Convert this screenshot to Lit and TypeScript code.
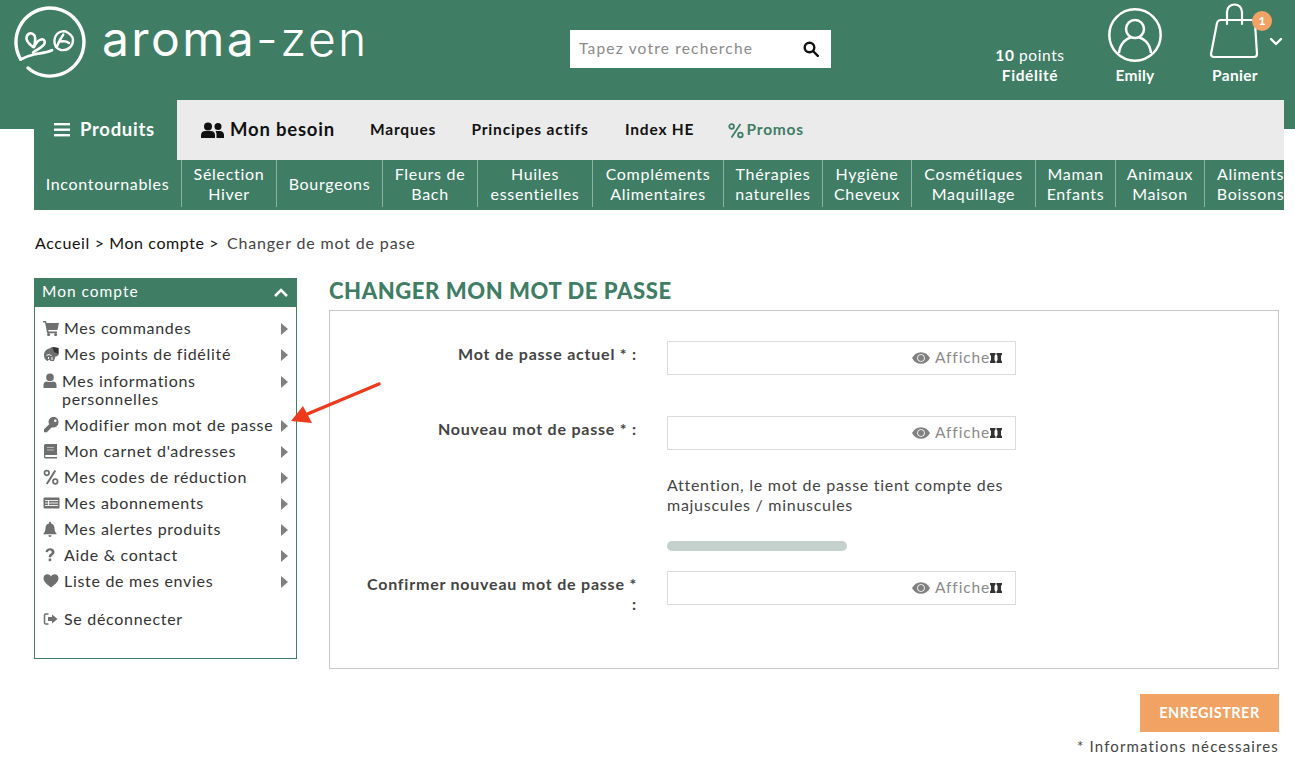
import { LitElement, html, css, svg } from "lit";
import { customElement } from "lit/decorators.js";

const GREY = "#6f6f6f";
const icons: Record<string, any> = {
  cart: svg`<path d="M0 1h3l.6 2H16l-1.6 7H5.2l.4 1.6H14v1.6H4.2L2 2.6H0z"/><circle cx="5.6" cy="14.6" r="1.5"/><circle cx="12.6" cy="14.6" r="1.5"/>`,
  coins: svg`<path d="M1 9c0-3.500 2.500-6 5.500-6.500L9 1l6.500 1v7c-1 1-2 1.500-3 1.500L11 15H7.500l-1-1.500-2 1.500C2 14 1 12 1 9z"/><path d="M9.500 1l6 1v6l-4.500-2z" fill="#333"/><path d="M3.500 9.500c2-1.500 4-1 5 .5M5.500 13v-2M9 14v-3" stroke="#fff" fill="none"/>`,
  user: svg`<circle cx="7" cy="4.4" r="3.8"/><path d="M.5 15v-3.200C.5 9.600 2.200 8.400 4 8.400c1 .8 5 .8 6 0 1.800 0 3.500 1.200 3.500 3.400V15z"/>`,
  key: svg`<path d="M15.500 5.500a5 5 0 0 1-6.600 4.700L3.800 15.300H1v-3l5.200-5A5 5 0 1 1 15.500 5.500z"/><circle cx="12.300" cy="3.700" r="1.300" fill="#fff"/>`,
  book: svg`<path d="M1 2.500A1.500 1.500 0 0 1 2.500 1H14v11H3a1 1 0 0 0 0 2h11v1.500H2.500A1.500 1.500 0 0 1 1 14z"/><path d="M4 4h7v1H4zM4 6.500h7v1H4z" fill="#fff" opacity=".5"/>`,
  pct: svg`<path d="M12.300 1.500L3.800 15" stroke-width="2" stroke="${GREY}" fill="none"/><circle cx="3.800" cy="4" r="2.300" fill="none" stroke="${GREY}" stroke-width="1.700"/><circle cx="12.300" cy="12.500" r="2.300" fill="none" stroke="${GREY}" stroke-width="1.700"/>`,
  list: svg`<path d="M1.500 2.500h14a1 1 0 0 1 1 1v9a1 1 0 0 1-1 1h-14a1 1 0 0 1-1-1v-9a1 1 0 0 1 1-1z"/><path d="M2 5.500h13M2 8h13M2 10.500h13M5.500 5v6" stroke="#fff" fill="none" stroke-width=".9"/>`,
  bell: svg`<path d="M7 .8c.6 0 1 .4 1 1v.7c2.300.5 3.500 2.400 3.500 4.500 0 3 .8 4.300 2 5.500v.8H.5V12.500c1.200-1.200 2-2.500 2-5.500C2.500 4.900 3.700 3 6 2.500v-.7c0-.6.4-1 1-1z"/><path d="M5.300 14.300h3.400a1.700 1.700 0 0 1-3.400 0z"/>`,
  help: svg`<path d="M2.500 5c.3-2.700 2.200-3.800 4.500-3.800 2.500 0 4.500 1.500 4.500 3.700 0 3-3.300 3.100-3.300 5.400H5.700c0-3.500 3-3.400 3-5.300 0-.9-.7-1.500-1.800-1.500-1.200 0-1.800.6-2 1.800z"/><rect x="5.700" y="11.500" width="2.500" height="2.700"/>`,
  heart: svg`<path d="M8 14.500C5 12 .5 9 .5 5.200.5 2.800 2.300 1.300 4.300 1.300c1.600 0 2.900.9 3.700 2.200.8-1.300 2.100-2.200 3.700-2.200 2 0 3.800 1.500 3.800 3.900C15.500 9 11 12 8 14.500z"/>`,
  out: svg`<path d="M5.500 3H2.800C2 3 1.500 3.500 1.500 4.300v7.400c0 .8.500 1.300 1.300 1.300h2.700" fill="none" stroke="${GREY}" stroke-width="1.500"/><path d="M9 3.500l5.500 4.500L9 12.500V10H5V6h4z"/>`,
};

interface Item { i: string; w: number; t: any; tall?: boolean; }
const items: Item[] = [
  { i: "cart", w: 17, t: "Mes commandes" },
  { i: "coins", w: 16, t: "Mes points de fidélité" },
  { i: "user", w: 14, t: html`Mes informations<br />personnelles`, tall: true },
  { i: "key", w: 16, t: "Modifier mon mot de passe" },
  { i: "book", w: 15, t: "Mon carnet d'adresses" },
  { i: "pct", w: 16, t: "Mes codes de réduction" },
  { i: "list", w: 17, t: "Mes abonnements" },
  { i: "bell", w: 14, t: "Mes alertes produits" },
  { i: "help", w: 14, t: "Aide & contact" },
  { i: "heart", w: 16, t: "Liste de mes envies" },
];

const sub = [
  ["Incontournables"], ["Sélection", "Hiver"], ["Bourgeons"], ["Fleurs de", "Bach"],
  ["Huiles", "essentielles"], ["Compléments", "Alimentaires"], ["Thérapies", "naturelles"],
  ["Hygiène", "Cheveux"], ["Cosmétiques", "Maquillage"], ["Maman", "Enfants"],
  ["Animaux", "Maison"], ["Aliments", "Boissons"],
];

@customElement("app-root")
export class AppRoot extends LitElement {
  static styles = css`
    :host { display: block; font-family: "Lato", "Open Sans", sans-serif; color: #333; }
    * { box-sizing: border-box; }
    .page { position: relative; height: 761px; overflow: hidden; background: linear-gradient(#3f7d65 129px, #fff 129px); }
    .top { display: flex; height: 100px; color: #fff; }
    .logo { display: flex; align-items: flex-start; width: 570px; padding: 6px 0 0 14px; }
    .logo svg { width: 74px; height: 74px; flex: none; display: block; }
    .wordmark { font-family: "Inter", sans-serif; font-weight: 300; font-size: 48px; letter-spacing: 2.4px; line-height: 66px; margin-left: 14px; }
    .wordmark b { font-weight: 400; }
    .search { width: 261px; height: 38px; margin-top: 30px; background: #fff; display: flex; align-items: center; justify-content: space-between; padding: 0 12px 2px 9px; color: #8a8a8a; font-size: 15.5px; letter-spacing: 1.18px; }
    .search svg { width: 16px; height: 16px; display: block; margin-top: 2px; }
    .right { margin-left: 139px; display: flex; }
    .acc { width: 90px; display: flex; flex-direction: column; align-items: center; justify-content: flex-end; height: 85px; font-weight: 700; font-size: 15.5px; line-height: 20px; letter-spacing: .3px; text-align: center; position: relative; }
    .acc.points { width: 120px; font-weight: 400; letter-spacing: .6px; }
    .acc.points b { font-weight: 700; }
    .acc.panier { width: 110px; }
    .acc svg { display: block; }
    .acc .usr { margin-bottom: 3px; }
    .badge { position: absolute; top: 11px; left: 72px; width: 20px; height: 20px; border-radius: 50%; background: #f2a263; font-size: 12px; line-height: 20px; font-weight: 900; letter-spacing: 0; }
    .nav { margin: 0 11px 0 34px; }
    .nav1 { display: flex; height: 60px; background: #ebebeb; align-items: center; color: #111; }
    .prod { width: 143px; height: 60px; background: #3f7d65; color: #fff; display: flex; align-items: center; gap: 10px; padding: 0 0 2px 20px; font-weight: 700; font-size: 18.5px; letter-spacing: .7px; }
    .prod svg { display: block; margin-top: 2px; }
    .besoin { display: flex; align-items: center; gap: 6px; margin-left: 24px; width: 169px; padding-bottom: 2px; font-size: 18.5px; font-weight: 700; letter-spacing: .8px; }
    .besoin svg { margin-top: 2px; }
    .l { font-weight: 700; font-size: 15.5px; letter-spacing: .8px; white-space: nowrap; padding-bottom: 2px; }
    .w1 { width: 101.5px; }
    .w2 { width: 153.5px; }
    .w3 { width: 102.5px; }
    .promos { color: #3f7d65; display: flex; align-items: center; gap: 3px; }
    .promos svg { margin-top: 2px; }
    .nav2 { display: grid; grid-template-columns: 148px 95px 106px 95px 115px 131px 99px 89px 124px 80px 89px 91px; height: 50px; background: #3f7d65; color: #fff; overflow: hidden; }
    .cell { height: 47px; display: flex; flex-direction: column; align-items: center; justify-content: center; border-right: 1px solid rgba(255,255,255,.4); font-size: 16px; line-height: 20px; letter-spacing: .7px; white-space: nowrap; padding-top: 1px; }
    .cell:last-child { border-right: 0; }
    .crumb { margin: 23px 0 0 35px; height: 21px; font-size: 16px; line-height: 20px; letter-spacing: .6px; color: #111; }
    .crumb span { color: #444; margin-left: 3px; letter-spacing: .85px; }
    .body { display: flex; margin: 24px 16px 0 34px; align-items: flex-start; }
    .side { width: 263px; height: 381px; border: 1px solid #3f7d65; flex: none; }
    .side-h { margin: -1px -1px 0; background: #3f7d65; color: #fff; display: flex; align-items: center; justify-content: space-between; padding: 0 9px 3px 8px; font-size: 15.5px; letter-spacing: 1px; height: 29px; }
    .side-h svg { margin-top: 3px; }
    .list { padding: 8px 7px 0 8px; }
    .row { display: flex; align-items: flex-start; padding: 4px 0; line-height: 18px; font-size: 16px; letter-spacing: .7px; color: #333; }
    .row.tall { padding: 5px 0 4px; }
    .ic { width: 21px; flex: none; margin-top: 1px; fill: #6f6f6f; display: flex; }
    .tall .ic { width: 19px; }
    .ic svg { display: block; }
    .tx { flex: 1; }
    .arr { width: 0; height: 0; border-left: 7px solid #808080; border-top: 6.5px solid transparent; border-bottom: 6.5px solid transparent; margin: 4px 1px 0 0; flex: none; }
    .row.logout { margin-top: 12px; }
    .main { margin-left: 32px; flex: 1; }
    h1 { margin: 0; font-size: 22px; line-height: 26px; font-weight: 900; color: #3f7d65; letter-spacing: .58px; height: 32px; }
    .box { height: 359px; border: 1px solid #c9c9c9; padding-top: 30px; }
    .f { display: grid; grid-template-columns: 307px 349px; column-gap: 30px; }
    .lab { text-align: right; font-weight: 700; font-size: 16px; line-height: 20px; letter-spacing: .78px; color: #444; padding-top: 3px; }
    .f2 { margin-top: 41px; }
    .f3 { margin-top: 20px; }
    .input { height: 34px; border: 1px solid #dcdcdc; display: flex; align-items: center; justify-content: flex-end; padding: 0 13px 3px 0; color: #8a8a8a; font-size: 15.5px; letter-spacing: .85px; gap: 5px; }
    .input svg { display: block; flex: none; margin-top: 3px; }
    .input .bt { width: 12px; margin-left: -5px; }
    .note { margin: 25px 0 0 337px; width: 350px; font-size: 16px; line-height: 20px; letter-spacing: .72px; color: #444; }
    .bar { margin: 26px 0 0 337px; width: 180px; height: 10px; border-radius: 5px; background: #c5d1cc; }
    .btn { margin: 25px 0 0 auto; width: 139px; height: 38px; padding-bottom: 1px; background: #f2a263; color: #fff; font-weight: 700; font-size: 14.5px; letter-spacing: .45px; display: flex; align-items: center; justify-content: center; }
    .req { text-align: right; margin-top: 4px; font-size: 15px; line-height: 20px; letter-spacing: 1.14px; color: #444; }
    .annot { position: absolute; left: 285px; top: 375px; pointer-events: none; }
  `;

  private eye() {
    return html`<svg width="18" height="12" viewBox="0 0 17 11"><path fill="#808080" d="M8.500 0C4.800 0 1.800 2.100 0 5.500 1.800 8.900 4.800 11 8.500 11s6.700-2.100 8.500-5.500C15.200 2.100 12.200 0 8.500 0z"/><circle cx="8.500" cy="5.500" r="3.600" fill="#fff"/><circle cx="8.500" cy="5.500" r="2.800" fill="#808080"/></svg>`;
  }
  private field() {
    return html`<div class="input">${this.eye()}<span>Affiche</span><svg class="bt" width="12" height="10" viewBox="0 0 12 10"><path fill="#333" d="M0 0h5.500v1.500l-1 1.500v4l1 1.500V10H0V8.500L1 7V3L0 1.500zM6.500 0H12v1.500L11 3v4l1 1.500V10H6.500V8.500l1-1.500V3l-1-1.500z"/></svg></div>`;
  }

  render() {
    return html`<div class="page">
      <div class="top">
        <div class="logo">
          <svg viewBox="0 0 74 74" fill="none" stroke="#fff" stroke-width="3.400" stroke-linecap="round" stroke-linejoin="round">
            <path d="M6.500 53A34 34 0 1 1 14 62"/>
            <path d="M6.500 53.500C11 51 15 49.500 20 48.500 27 47 32 47 38 44.300" stroke-width="2.800"/>
            <path d="M19 41C15 38 11.500 34 12.700 30.500 14 27 18 26 20.500 29.500 22 32.500 21 37 20 41" stroke-width="2.600"/>
            <path d="M20 41C22 37 25 33.500 28 33.300 31 33.500 31.500 36 30 38.500 27.500 42 23 43.500 19 46.500" stroke-width="2.600"/>
            <path d="M42 41C39.500 37 40 31 43 28 46 25 50.500 24.500 53.500 26.500 58 29 60 33 58.500 37.500 56.500 42.500 52 44.500 47 44 45 43.700 43.500 42.700 42 41zM42.700 41C44.500 36.500 46.500 32.500 49.300 28.500M47 35.500C50 35 53 35.500 55 37" stroke-width="2.400"/>
          </svg>
          <span class="wordmark"><b>aroma</b>-zen</span>
        </div>
        <div class="search">
          <span>Tapez votre recherche</span>
          <svg viewBox="0 0 16 16" fill="none" stroke="#111" stroke-width="2.400"><circle cx="6.500" cy="6.500" r="4.800"/><path d="M10 10l4.800 4.800" stroke-linecap="round"/></svg>
        </div>
        <div class="right">
          <div class="acc points"><div><b>10</b> points</div><b>Fidélité</b></div>
          <div class="acc">
            <svg class="usr" width="54" height="54" viewBox="0 0 54 54" fill="none" stroke="#fff" stroke-width="2.500"><circle cx="27" cy="27" r="25.700"/><circle cx="27" cy="21" r="9"/><path d="M11 45c1-10 8-15 12-15.500M43 45c-1-10-8-15-12-15.500"/></svg>
            <div>Emily</div>
          </div>
          <div class="acc panier">
            <svg width="100" height="62" viewBox="0 0 100 62" fill="none" stroke="#fff" stroke-width="2.200" stroke-linecap="round" stroke-linejoin="round"><path d="M36 17c-2 0-3.500 1-4 3L26 51c0 2 1 3 3 3h40c2 0 3-1 3-3l-2-31c0-2-1-3-3-3H36z"/><path d="M42 21V9c0-10 15-10 15 0v12"/><path d="M86 36l5 5 5-5" stroke-width="2.400"/></svg>
            <div>Panier</div>
            <span class="badge">1</span>
          </div>
        </div>
      </div>
      <div class="nav">
        <div class="nav1">
          <div class="prod"><svg width="16" height="14" viewBox="0 0 16 14" fill="#fff"><rect y="0" width="16" height="2.400"/><rect y="5.500" width="16" height="2.400"/><rect y="11" width="16" height="2.400"/></svg>Produits</div>
          <div class="besoin"><svg width="23" height="17" viewBox="0 0 23 17" fill="#111"><circle cx="7" cy="4.500" r="4"/><circle cx="17" cy="4.500" r="3.500"/><path d="M0 16v-3c0-2.500 2-4 4-4h6c2 0 4 1.500 4 4v3z"/><path d="M15.500 16v-4c0-1-.4-2-1-3h4.500c2 0 4 1.500 4 4v3z"/></svg>Mon besoin</div>
          <span class="l w1">Marques</span>
          <span class="l w2">Principes actifs</span>
          <span class="l w3">Index HE</span>
          <span class="l promos"><svg width="16" height="17" viewBox="0 0 16 16" fill="none" stroke="#3f7d65" stroke-width="1.800"><path d="M12.500 1.500L3.500 15"/><circle cx="3.600" cy="4" r="2.300"/><circle cx="12.400" cy="12.500" r="2.300"/></svg>Promos</span>
        </div>
        <div class="nav2">
          ${sub.map((s) => html`<div class="cell">${s.map((t) => html`<div>${t}</div>`)}</div>`)}
        </div>
      </div>
      <div class="crumb">Accueil &gt; Mon compte &gt; <span>Changer de mot de pase</span></div>
      <div class="body">
        <aside class="side">
          <div class="side-h"><span>Mon compte</span><svg width="14" height="9" viewBox="0 0 14 9" fill="none" stroke="#fff" stroke-width="2.600"><path d="M1 8l6-6 6 6"/></svg></div>
          <div class="list">
            ${items.map(
              (it) => html`<div class="row ${it.tall ? "tall" : ""}">
                <span class="ic"><svg width=${it.w} height="16" viewBox="0 0 ${it.w} 16">${icons[it.i]}</svg></span>
                <span class="tx">${it.t}</span><span class="arr"></span>
              </div>`
            )}
            <div class="row logout"><span class="ic"><svg width="16" height="16" viewBox="0 0 16 16">${icons.out}</svg></span><span class="tx">Se déconnecter</span></div>
          </div>
        </aside>
        <main class="main">
          <h1>CHANGER MON MOT DE PASSE</h1>
          <div class="box">
            <div class="f"><div class="lab">Mot de passe actuel * :</div>${this.field()}</div>
            <div class="f f2"><div class="lab">Nouveau mot de passe * :</div>${this.field()}</div>
            <div class="note">Attention, le mot de passe tient compte des majuscules / minuscules</div>
            <div class="bar"></div>
            <div class="f f3"><div class="lab">Confirmer nouveau mot de passe *<br />:</div>${this.field()}</div>
          </div>
          <div class="btn">ENREGISTRER</div>
          <div class="req">* Informations nécessaires</div>
        </main>
      </div>
      <svg class="annot" width="100" height="55" viewBox="0 0 100 55"><path d="M94 9L20 40" stroke="#ee3a1c" stroke-width="3.500" stroke-linecap="round"/><path d="M6 46l12-15 9 17z" fill="#ee3a1c"/></svg>
    </div>`;
  }
}
